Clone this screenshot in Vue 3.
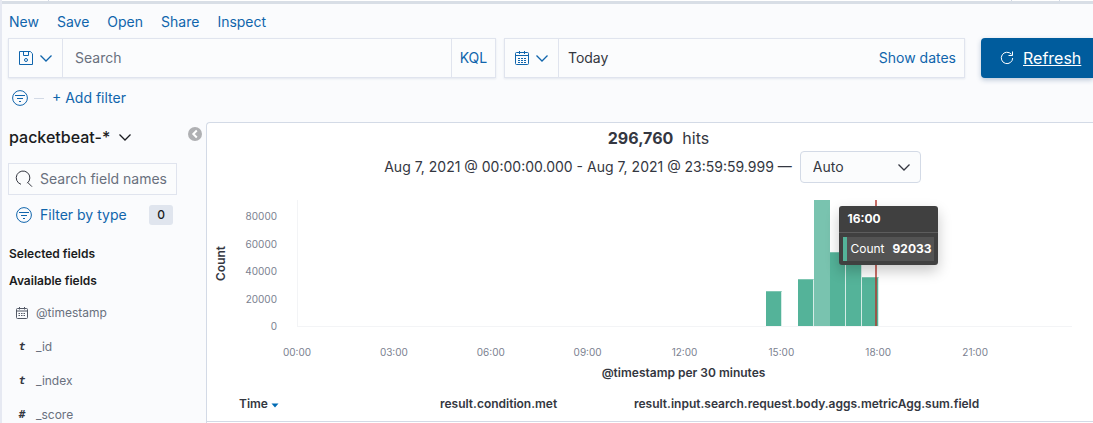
<script setup>
import { ref } from 'vue'

const menu = ['New', 'Save', 'Open', 'Share', 'Inspect']
const query = ref('')
const fieldQuery = ref('')
const interval = ref('Auto')

const fields = [
  { name: '@timestamp', type: 'date' },
  { name: '_id', type: 'string' },
  { name: '_index', type: 'string' },
  { name: '_score', type: 'number' }
]
const glyphs = { string: 't', number: '#' }

const slots = 48
const max = 92033
const bars = [
  { slot: 29, count: 25600 },
  { slot: 31, count: 34000 },
  { slot: 32, count: 92033, active: true },
  { slot: 33, count: 54300 },
  { slot: 34, count: 50000 },
  { slot: 35, count: 35500 }
].map((b) => ({
  ...b,
  style: { gridColumn: b.slot + 1, height: (b.count / max) * 100 + '%' }
}))
const gridStyle = { gridTemplateColumns: `repeat(${slots}, minmax(0, 1fr))` }
const nowStyle = { left: (35.77 / slots) * 100 + '%' }
const tipStyle = { left: (33.58 / slots) * 100 + '%' }
const yTicks = ['80000', '60000', '40000', '20000', '0']
const xTicks = ['00:00', '03:00', '06:00', '09:00', '12:00', '15:00', '18:00', '21:00']
</script>

<template>
  <div class="page">
    <div class="strip"><span class="strip-start"></span><span class="strip-mid"></span><span class="strip-tab"></span><span class="strip-end"></span></div>

    <nav class="menu">
      <a v-for="m in menu" :key="m" href="#">{{ m }}</a>
    </nav>

    <div class="query-row">
      <div class="box query">
        <button class="icon-btn save" aria-label="Saved queries">
          <svg width="16" height="16" viewBox="0 0 16 16"><path d="M1.5 1.5h10.8l2.2 2.2v10.8h-13zM5.5 1.5v4h5v-4" /><circle cx="8" cy="10" r="1.5" /></svg>
          <svg class="chev" width="14" height="16" viewBox="0 0 14 16"><path d="M1.500 5.500L7 11l5.500-5.500" /></svg>
        </button>
        <input v-model="query" class="query-input" type="text" placeholder="Search" aria-label="Search" />
        <button class="kql">KQL</button>
      </div>
      <div class="box dates">
        <button class="icon-btn calendar" aria-label="Date quick select">
          <svg width="16" height="16" viewBox="0 0 16 16"><rect x="1.500" y="2.500" width="13" height="12" rx="1" /><path d="M1.500 5.500h13M5.500 1v3M10.500 1v3" /><path d="M4 8.500h8.500M4 10.500h8.500M4 12.500h8.500" stroke-dasharray="2 1" /></svg>
          <svg class="chev" width="14" height="16" viewBox="0 0 14 16"><path d="M1.500 5.500L7 11l5.500-5.500" /></svg>
        </button>
        <button class="today">Today</button>
        <button class="show">Show dates</button>
      </div>
      <button class="refresh">
        <svg width="16" height="16" viewBox="0 0 16 16"><path d="M12.300 4.200A5.700 5.700 0 1 0 13.700 8M13.500 1.500v4h-4" /></svg>
        <span>Refresh</span>
      </button>
    </div>

    <div class="filter-row">
      <button class="round" aria-label="Filter options">
        <svg width="16" height="16" viewBox="0 0 16 16"><circle cx="8" cy="8" r="7.400" /><path d="M3 5.500h10M5 8.500h6M7 11.500h2" /></svg>
      </button>
      <span class="dash"></span>
      <button class="add">+ Add filter</button>
    </div>

    <div class="body">
      <aside class="side">
        <div class="index-row">
          <button class="index">packetbeat-*
            <svg class="chev" width="14" height="16" viewBox="0 0 14 16"><path d="M1.500 5.500L7 11l5.500-5.500" /></svg>
          </button>
          <button class="collapse" aria-label="Collapse sidebar">
            <svg width="14" height="14" viewBox="0 0 14 14"><circle cx="7" cy="7" r="7" /><path d="M8.800 3.500L5.300 7l3.500 3.500" /></svg>
          </button>
        </div>
        <label class="field-search">
          <svg width="18" height="18" viewBox="0 0 18 18"><path d="M6 14.300A6.800 6.800 0 1 1 12.200 13.200M13 12.700l4 4" /></svg>
          <input v-model="fieldQuery" type="text" placeholder="Search field names" aria-label="Search field names" />
        </label>
        <button class="type-filter">
          <svg width="16" height="16" viewBox="0 0 16 16"><circle cx="8" cy="8" r="7.400" /><path d="M3 5.500h10M5 8.500h6M7 11.500h2" /></svg>
          <span>Filter by type</span>
          <span class="badge">0</span>
        </button>
        <h2>Selected fields</h2>
        <h2>Available fields</h2>
        <ul>
          <li v-for="f in fields" :key="f.name">
            <svg v-if="f.type === 'date'" class="type" width="12" height="12" viewBox="0 0 12 12"><rect x="0.500" y="1.500" width="11" height="10" rx="1" /><path d="M0.500 4h11M3.500 0v2.500M8.500 0v2.500" /><path d="M2.500 6.500h7.500M2.500 8.500h7.500" stroke-dasharray="1.500 1" /></svg>
            <span v-else class="type glyph">{{ glyphs[f.type] }}</span>
            <span>{{ f.name }}</span>
          </li>
        </ul>
      </aside>

      <main class="panel">
        <div class="hits"><strong>296,760</strong><span>hits</span></div>
        <div class="range">
          <span>Aug 7, 2021 @ 00:00:00.000 - Aug 7, 2021 @ 23:59:59.999 —</span>
          <span class="select">
            <select v-model="interval" aria-label="Time interval"><option>Auto</option></select>
            <svg class="chev" width="14" height="16" viewBox="0 0 14 16"><path d="M1.500 5.500L7 11l5.500-5.500" /></svg>
          </span>
        </div>

        <div class="chart">
          <div class="y-title">Count</div>
          <div class="y-axis"><span v-for="y in yTicks" :key="y">{{ y }}</span></div>
          <div class="plot">
            <div class="bars" :style="gridStyle">
              <div v-for="b in bars" :key="b.slot" class="bar" :class="{ active: b.active }" :style="b.style"></div>
            </div>
            <div class="now" :style="nowStyle"></div>
            <div class="tip" :style="tipStyle">
              <div class="tip-head">16:00</div>
              <div class="tip-row"><span>Count</span><strong>92033</strong></div>
            </div>
          </div>
          <div class="x-axis"><div v-for="x in xTicks" :key="x"><span>{{ x }}</span></div></div>
          <div class="x-title">@timestamp per 30 minutes</div>
        </div>

        <table>
          <thead>
            <tr>
              <th class="time">Time <svg width="8" height="5" viewBox="0 0 8 5"><path d="M0.500 0.500h7L4 4.500z" /></svg></th>
              <th class="met">result.condition.met</th>
              <th>result.input.search.request.body.aggs.metricAgg.sum.field</th>
            </tr>
          </thead>
        </table>
      </main>
    </div>
  </div>
</template>

<style>
body { background: #fafbfd; overflow: hidden; }
</style>

<style scoped>
* { box-sizing: border-box; }
.page {
  font: 14px/20px Inter, "Liberation Sans", sans-serif;
  color: #343741;
  background: #fafbfd;
  border-left: 2px solid #e6e9f2;
  overflow: hidden;
}
button, input, select { font: inherit; color: inherit; border: 0; padding: 0; margin: 0; background: none; outline: none; }
button { display: flex; align-items: center; }
svg { fill: none; stroke: currentColor; flex: none; }
.chev { stroke-width: 1.3; }
a { color: #1065ac; text-decoration: none; }

.strip { display: flex; height: 4px; background: #fff; border-bottom: 3px solid #d8dee6; }
.strip-start { width: 47px; border-right: 1px solid #d3dae6; }
.strip-mid { flex: 1; }
.strip-tab { width: 48px; border-left: 1px solid #d3dae6; }
.strip-end { width: 34px; border-left: 1px solid #d3dae6; }

.menu { display: flex; gap: 18px; padding: 8px 7px 6px; }

.query-row { display: flex; height: 40px; padding-left: 6px; }
.box { display: flex; background: #fbfcfd; border: 1px solid #e0e4ee; box-shadow: 0 1px 2px rgba(90, 110, 150, .14); }
.query { flex: 488 1 0; margin-right: 8px; min-width: 0; }
.dates { flex: 461 1 0; margin-right: 16px; min-width: 0; }
.icon-btn { flex: none; width: 54px; justify-content: center; gap: 5px; border-right: 1px solid #e0e4ee; color: #1065ac; }
.query-input { flex: 1; min-width: 0; padding-left: 12px; }
input::placeholder { color: #69707d; opacity: 1; }
.kql { width: 44px; justify-content: center; border-left: 1px solid #e0e4ee; color: #1065ac; }
.today { flex: 1; padding-left: 9px; }
.show { color: #1065ac; padding-right: 8px; }
.refresh {
  width: 112px; flex: none; padding-left: 18px; gap: 8px;
  background: #005c9d; color: #fff; border-radius: 4px 0 0 4px;
  font-size: 16px; text-decoration: underline;
  box-shadow: 0 2px 5px rgba(40, 80, 130, .3);
}

.filter-row { display: flex; align-items: center; height: 40px; padding-left: 10px; color: #1065ac; }
.dash { width: 10px; height: 1px; background: #d3dae6; margin: 0 8px 0 6px; }

.body { display: flex; margin-top: 4px; }
.side { width: 204px; flex: none; padding: 5px 0 0 6px; }
.index-row { display: flex; justify-content: space-between; align-items: flex-start; padding-right: 4px; }
.index { font-size: 16px; font-weight: 500; color: #1a1c21; gap: 8px; padding-left: 1px; }
.collapse svg { fill: #afb0b3; stroke: none; }
.collapse path { fill: none; stroke: #fff; stroke-width: 2; }
.field-search { display: flex; align-items: center; gap: 7px; width: 169px; height: 32px; margin-top: 16px; padding-left: 6px; border: 1px solid #e0e4ee; background: #fbfcfd; }
.field-search input { flex: 1; min-width: 0; }
.type-filter { width: 165px; height: 20px; margin-top: 10px; padding-left: 8px; gap: 8px; color: #1065ac; }
.badge { margin-left: auto; width: 24px; text-align: center; font-size: 12px; font-weight: 500; background: #e0e5ee; color: #1a1c21; border-radius: 3px; }
h2 { margin: 7px 0 0 1px; font-size: 12px; font-weight: 600; line-height: 20px; color: #1a1c21; }
.type-filter + h2 { margin-top: 19px; }
ul { list-style: none; margin: 5px 0 0; padding: 0; }
li { display: flex; align-items: center; gap: 8px; height: 34px; padding-left: 8px; font-size: 12px; color: #69707d; }
.type { width: 12px; color: #535966; }
.glyph { font: italic bold 11px/14px "DejaVu Sans Mono", monospace; text-align: center; color: #343741; }

.panel { flex: 1; min-width: 0; background: #fff; border: 1px solid #d3dae6; border-width: 1px 0 0 1px; border-radius: 4px 0 0 0; }
.hits { display: flex; justify-content: center; gap: 9px; padding: 5px 0 3px 17px; font-size: 16px; }
.hits strong { font-weight: 700; }
.range { display: flex; justify-content: center; align-items: center; gap: 8px; padding-left: 5px; }
.select { display: flex; align-items: center; position: relative; }
.select select { appearance: none; width: 121px; height: 32px; padding-left: 12px; border: 1px solid #d3dae6; border-radius: 4px; background: #fbfcfd; }
.select svg { position: absolute; right: 10px; pointer-events: none; }

.chart { display: grid; grid-template-columns: 28px 42px minmax(0, 1fr); grid-template-rows: 127px 38px 16px; padding-right: 21px; margin-top: 17px; }
.y-title { writing-mode: vertical-rl; transform: rotate(180deg); text-align: center; font-size: 12px; font-weight: 600; line-height: 28px; }
.y-axis { display: flex; flex-direction: column; justify-content: space-between; align-items: flex-end; height: 122px; margin-top: 10px; font-size: 10px; line-height: 12px; color: #7b8190; }
.plot { position: relative; margin-left: 20px; border: 1px solid #f3f4f6; border-width: 0 0 1px 1px; }
.bars { display: grid; height: 100%; align-items: end; }
.bar { background: #54b399; border-right: 1px solid #d4ece6; border-top: 1px solid #7fc6b2; }
.bar.active { background: #79c3af; border-color: #79c3af; }
.now { position: absolute; top: 0; bottom: 0; width: 2px; background: rgba(180, 50, 40, .7); }
.tip { position: absolute; top: 6px; width: 99px; height: 59px; border-radius: 3px; background: #404040; color: #fff; font-size: 12px; box-shadow: 0 6px 14px rgba(0, 0, 0, .22); }
.tip-head { height: 27px; padding-left: 8px; line-height: 26px; font-weight: 700; border-bottom: 1px solid #5d5d5d; }
.tip-row { display: flex; justify-content: space-between; margin: 4px; height: 24px; padding: 0 3px; line-height: 24px; background: #535353; border-left: 4px solid #54b399; }
.x-axis { grid-column: 3; display: grid; grid-template-columns: repeat(8, 1fr); margin-left: 20px; padding-top: 18px; font-size: 10px; line-height: 14px; color: #7b8190; }
.x-axis span { display: block; width: 48px; margin-left: -24px; text-align: center; }
.x-title { grid-column: 3; margin-left: 18px; text-align: center; font-size: 12px; font-weight: 600; line-height: 16px; }

table { width: 100%; border-collapse: collapse; table-layout: fixed; margin-top: 6px; }
th { height: 34px; padding: 0 0 0 8px; text-align: left; font-size: 12px; font-weight: 600; line-height: 18px; border-bottom: 1px solid #d3dae6; white-space: nowrap; }
.time { width: 225px; padding-left: 32px; }
.met { width: 194px; }
.time svg { fill: #006bb4; stroke: none; }
</style>
